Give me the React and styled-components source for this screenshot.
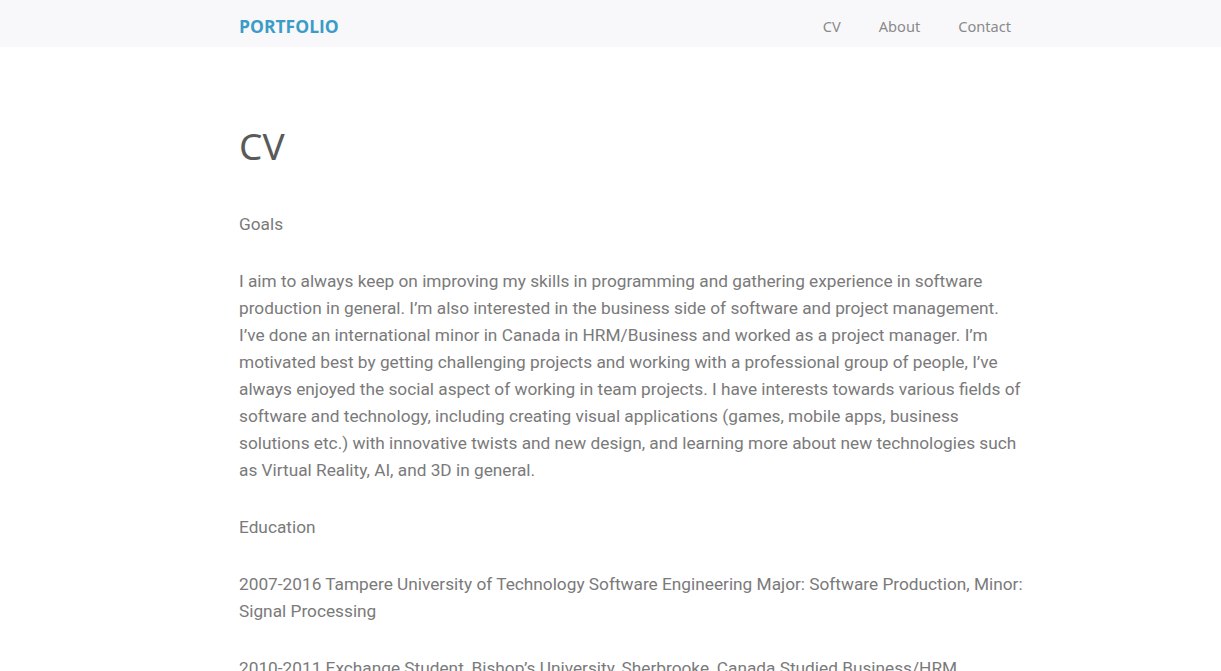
import React from "react";
import styled, { createGlobalStyle } from "styled-components";

const Global = createGlobalStyle`
  html, body { margin: 0; padding: 0; background: #fff; }
  body { font-family: Roboto, "Noto Sans", sans-serif; color: #777; }
`;

const NavBar = styled.header`
  background: #f8f8fa;
  height: 47px;
`;

const NavInner = styled.div`
  width: 792px;
  margin-left: 239px;
  height: 100%;
  display: flex;
  align-items: center;
  padding-top: 5px;
  box-sizing: border-box;
`;

const Logo = styled.a`
  font-family: "Open Sans", sans-serif;
  font-weight: 700;
  font-size: 17.5px;
  color: #3b9cc6;
  text-decoration: none;
`;

const Links = styled.nav`
  margin-left: auto;
  margin-right: 20px;
  display: flex;
  gap: 38px;
`;

const NavLink = styled.a`
  font-family: "Noto Sans", sans-serif;
  font-size: 14.6px;
  color: #8a8a8a;
  text-decoration: none;
`;

const Main = styled.main`
  width: 786px;
  margin-left: 239px;
  padding-top: 72px;
`;

const Title = styled.h1`
  font-family: "Noto Sans", sans-serif;
  font-weight: 400;
  font-size: 37px;
  color: #5a5a5a;
  margin: 0 0 38px;
  line-height: 54px;
`;

const Para = styled.p`
  font-size: 17.25px;
  line-height: 27px;
  margin: 0 0 30px;
  color: #7a7a7a;
`;

export default function App() {
  return (
    <>
      <Global />
      <NavBar>
        <NavInner>
          <Logo href="#">PORTFOLIO</Logo>
          <Links>
            <NavLink href="#">CV</NavLink>
            <NavLink href="#">About</NavLink>
            <NavLink href="#">Contact</NavLink>
          </Links>
        </NavInner>
      </NavBar>
      <Main>
        <Title>CV</Title>
        <Para>Goals</Para>
        <Para>
          I aim to always keep on improving my skills in programming and gathering experience in software
          production in general. I’m also interested in the business side of software and project management.
          I’ve done an international minor in Canada in HRM/Business and worked as a project manager. I’m
          motivated best by getting challenging projects and working with a professional group of people, I’ve
          always enjoyed the social aspect of working in team projects. I have interests towards various fields of
          software and technology, including creating visual applications (games, mobile apps, business
          solutions etc.) with innovative twists and new design, and learning more about new technologies such
          as Virtual Reality, AI, and 3D in general.
        </Para>
        <Para>Education</Para>
        <Para>
          2007-2016 Tampere University of Technology Software Engineering Major: Software Production, Minor:
          Signal Processing
        </Para>
        <Para>
          2010-2011 Exchange Student, Bishop’s University, Sherbrooke, Canada Studied Business/HRM
        </Para>
      </Main>
    </>
  );
}
